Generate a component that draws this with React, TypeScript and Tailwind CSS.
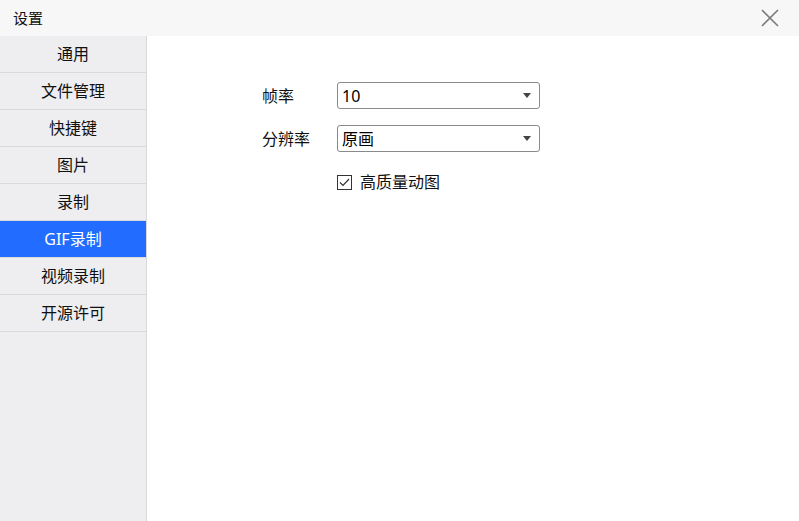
import { useState } from "react";

const menu = ["通用", "文件管理", "快捷键", "图片", "录制", "GIF录制", "视频录制", "开源许可"];

function Select({ value }: { value: string }) {
  return (
    <div className="flex h-[27px] w-[203px] items-center justify-between rounded-[3px] border border-[#8a8a8a] bg-white pl-[4px] pr-[8px] text-[16px] text-black">
      <span>{value}</span>
      <svg width="8" height="5" viewBox="0 0 8 5" aria-hidden>
        <path d="M0 0h8L4 5z" fill="#444" />
      </svg>
    </div>
  );
}

export default function App() {
  const [active, setActive] = useState(5);
  const [hq, setHq] = useState(true);

  return (
    <div
      className="flex h-[521px] w-[799px] flex-col overflow-hidden bg-white text-[16px] text-[#111]"
      style={{ fontFamily: '"Noto Sans", "Noto Sans CJK SC", sans-serif' }}
    >
      <div className="flex h-9 shrink-0 items-center justify-between bg-[#f7f7f7] pl-[13px] pr-[20px]">
        <span className="text-[15px]">设置</span>
        <svg width="18" height="18" viewBox="0 0 18 18" aria-hidden>
          <path d="M1 1L17 17M17 1L1 17" stroke="#7a7a7a" strokeWidth="1.6" />
        </svg>
      </div>

      <div className="flex flex-1">
        <div className="w-[147px] shrink-0 border-r border-[#dadadd] bg-[#eeeef0]">
          {menu.map((item, i) => (
            <button
              key={item}
              onClick={() => setActive(i)}
              className={
                i === active
                  ? "flex h-[37px] w-full items-center justify-center border-b border-[#dadadd] bg-[#226dff] text-white"
                  : "flex h-[37px] w-full items-center justify-center border-b border-[#dadadd] text-[#111]"
              }
            >
              {item}
            </button>
          ))}
        </div>

        <div className="flex-1 pl-[115px] pt-[46px]">
          <div className="flex flex-col gap-[16px]">
            <div className="flex items-center">
              <span className="w-[75px]">帧率</span>
              <Select value="10" />
            </div>
            <div className="flex items-center">
              <span className="w-[75px]">分辨率</span>
              <Select value="原画" />
            </div>
          </div>
          <label className="ml-[75px] mt-[18px] flex cursor-pointer items-center gap-[8px]">
            <span
              onClick={() => setHq(!hq)}
              className="flex h-[15px] w-[15px] items-center justify-center border border-[#333] bg-white"
            >
              {hq && (
                <svg width="11" height="9" viewBox="0 0 11 9" aria-hidden>
                  <path d="M1 4.5L4 7.5L10 1" stroke="#333" strokeWidth="1.2" fill="none" />
                </svg>
              )}
            </span>
            <span>高质量动图</span>
          </label>
        </div>
      </div>
    </div>
  );
}
